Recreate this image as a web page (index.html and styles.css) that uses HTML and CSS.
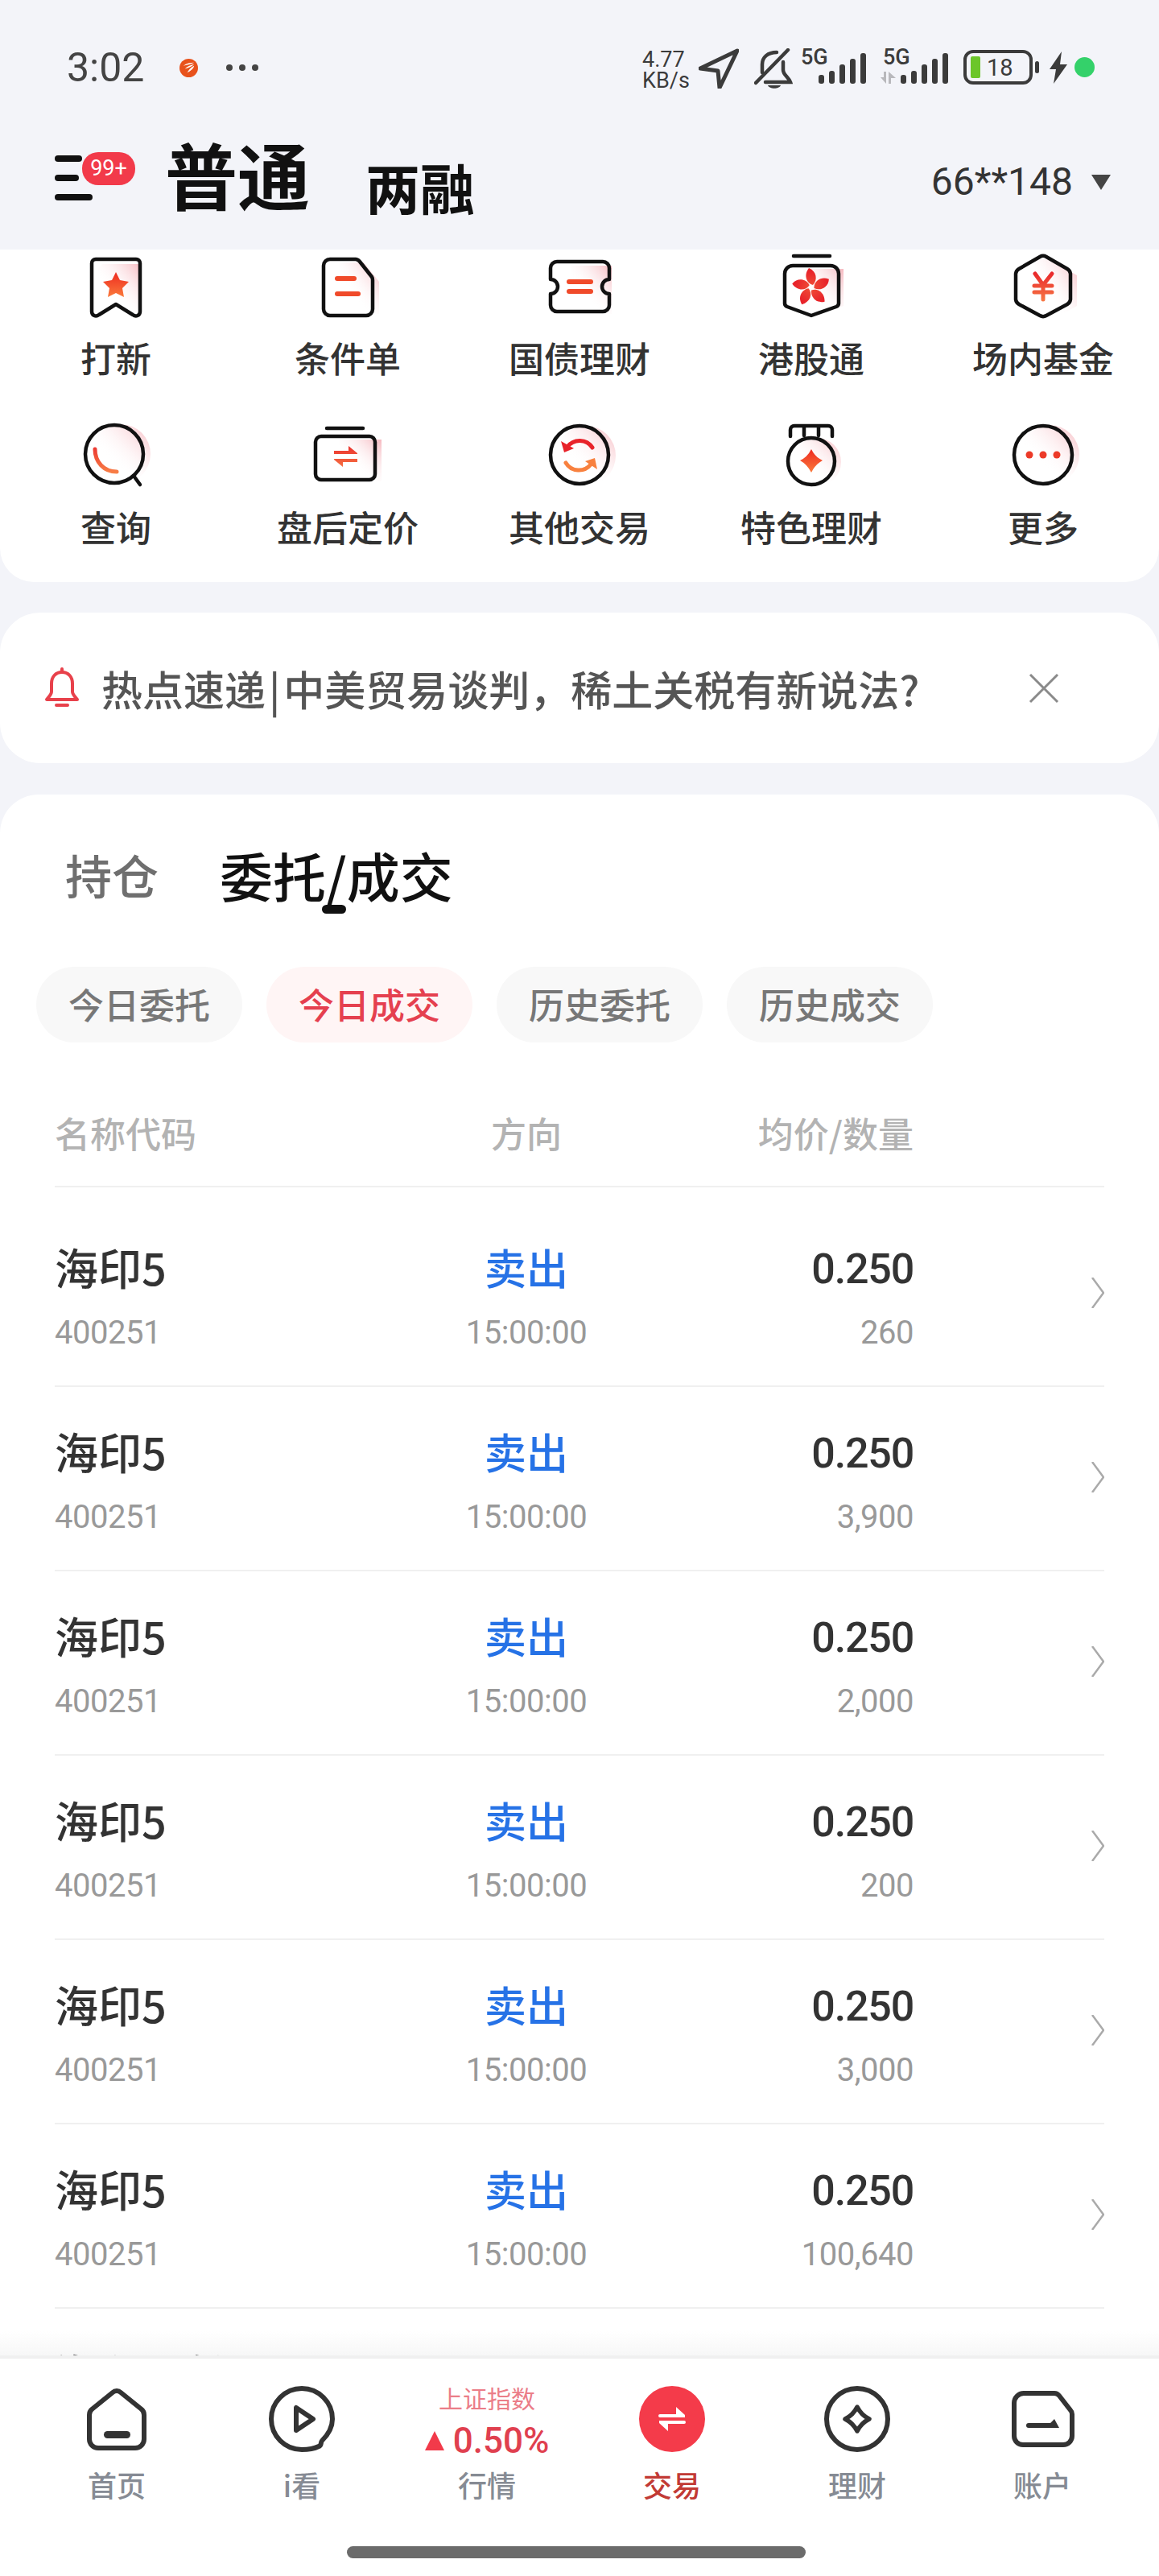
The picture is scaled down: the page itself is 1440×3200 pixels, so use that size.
FILE: index.html
```html
<!DOCTYPE html>
<html lang="zh-CN">
<head>
    <meta charset="UTF-8">
    <title>交易</title>
    <link rel="stylesheet" href="styles.css">
</head>
<body>
<svg class="defs">
    <defs>
        <linearGradient id="red" x1="0" y1="0" x2="0" y2="1">
            <stop offset="0" stop-color="#ee2a20"/>
            <stop offset="1" stop-color="#fa7a3c"/>
        </linearGradient>
        <linearGradient id="redline" gradientUnits="userSpaceOnUse" x1="0" y1="25" x2="0" y2="70">
            <stop offset="0" stop-color="#e8232a"/>
            <stop offset="1" stop-color="#fa8a4a"/>
        </linearGradient>
        <linearGradient id="pink" x1="1" y1="0" x2="0.35" y2="0.65">
            <stop offset="0" stop-color="#f6b8bf"/>
            <stop offset="1" stop-color="#fff" stop-opacity="0"/>
        </linearGradient>
    </defs>
</svg>

<header class="top">
    <div class="status">
        <span class="clock">3:02</span>
        <svg class="app-logo" viewBox="0 0 24 24">
            <circle cx="12" cy="12" r="12" fill="#e8521c"/>
            <path d="M5 9c4-3 9-4 14-4-4 2-8 3-14 4zM7 13c3-3 7-5 12-6-3 3-7 5-12 6zM10 18c2-4 5-7 9-9-1 4-5 7-9 9z" fill="#fff"/>
        </svg>
        <span class="more-dots"><i></i><i></i><i></i></span>
        <div class="status-right">
            <div class="speed">4.77<br>KB/s</div>
            <svg class="s-nav" viewBox="0 0 50 50"><path d="M48 3 2 25l22 3 2 21z" fill="none" stroke="#3b3b3b" stroke-width="5" stroke-linejoin="round"/></svg>
            <svg class="s-bell" viewBox="0 0 50 50">
                <g fill="none" stroke="#3b3b3b" stroke-width="4.5" stroke-linecap="round">
                    <path d="M42 2 2 43"/>
                    <path d="M10 30V20C10 11 17 5 28 5"/>
                    <path d="M36 17v10c0 6 7 9 9 15H14"/>
                </g>
                <path d="M17 46h16c-2 5-14 5-16 0z" fill="#3b3b3b"/>
            </svg>
            <svg class="s-sim" viewBox="0 -10 82 60">
                <text x="0" y="20" class="sim-text">5G</text>
                <rect x="22" y="33" width="7" height="11" rx="3"/><rect x="35" y="28" width="7" height="16" rx="3"/><rect x="48" y="20" width="7" height="24" rx="3"/><rect x="61" y="13" width="7" height="31" rx="3"/><rect x="74" y="6" width="7" height="38" rx="3"/>
            </svg>
            <svg class="s-sim two" viewBox="0 -10 84 60">
                <text x="3" y="20" class="sim-text">5G</text>
                <path class="sim-arrows" d="M0 36h4v-7h3v15zM10 29v15h3v-7h6z"/>
                <rect x="25" y="33" width="7" height="11" rx="3"/><rect x="38" y="28" width="7" height="16" rx="3"/><rect x="51" y="20" width="7" height="24" rx="3"/><rect x="64" y="13" width="7" height="31" rx="3"/><rect x="77" y="6" width="7" height="38" rx="3"/>
            </svg>
            <svg class="s-batt" viewBox="0 0 96 44">
                <rect x="2" y="2" width="82" height="39" rx="10" fill="none" stroke="#3b3b3b" stroke-width="4"/>
                <rect x="9" y="8" width="12" height="27" rx="2" fill="#6cc62a"/>
                <text x="29" y="32" class="batt-text">18</text>
                <rect x="89" y="14" width="5" height="15" rx="2.5" fill="#3b3b3b"/>
            </svg>
            <svg class="s-bolt" viewBox="0 0 25 40"><path d="M17 0 2 22h8L7 40l17-24h-9z" fill="#3b3b3b"/></svg>
            <span class="s-dot"></span>
        </div>
    </div>
    <div class="nav">
        <div class="menu">
            <i class="l1"></i><i class="l2"></i><i class="l3"></i>
            <span class="badge">99+</span>
        </div>
        <span class="title-main">普通</span>
        <span class="title-sub">两融</span>
        <div class="account">66**148<span class="tri"></span></div>
    </div>
</header>

<section class="grid-card">
    <div class="cell">
        <svg class="ico" viewBox="0 0 100 90">
            <path class="shade" d="M33 16h44a5 5 0 0 1 5 5v58l-32-13-22 13V21z"/>
            <path class="line" d="M25 10h50a5 5 0 0 1 5 5v60c0 5-5 7-9 4L50 66 29 79c-4 3-9 1-9-4V15a5 5 0 0 1 5-5z"/>
            <path fill="url(#red)" d="m50 26 5 10 11 2-8 8 2 11-10-5-10 5 2-11-8-8 11-2z"/>
        </svg>
        <span>打新</span>
    </div>
    <div class="cell">
        <svg class="ico" viewBox="0 0 100 90">
            <path class="shade" d="M40 14h30l19 24v40H40z"/>
            <path class="line" d="M28 10h32a7 7 0 0 1 5 3l15 19a7 7 0 0 1 1 4v36a8 8 0 0 1-8 8H28a8 8 0 0 1-8-8V18a8 8 0 0 1 8-8z"/>
            <rect x="34" y="31" width="27" height="6" rx="3" fill="#f04a2a"/>
            <rect x="34" y="50" width="32" height="6" rx="3" fill="#f04a2a"/>
        </svg>
        <span>条件单</span>
    </div>
    <div class="cell">
        <svg class="ico" viewBox="0 0 100 90">
            <path class="shade" d="M40 18h50v60H40z"/>
            <path class="line" d="M22 13h57a8 8 0 0 1 8 8v14a9 9 0 0 0 0 18v14a8 8 0 0 1-8 8H22a8 8 0 0 1-8-8V53a9 9 0 0 0 0-18V21a8 8 0 0 1 8-8z"/>
            <rect x="34" y="35" width="33" height="6" rx="3" fill="#f04a2a"/>
            <rect x="34" y="47" width="33" height="6" rx="3" fill="#f04a2a"/>
        </svg>
        <span>国债理财</span>
    </div>
    <div class="cell">
        <svg class="ico" viewBox="0 0 100 90">
            <path class="shade" d="M40 22h50v46l-30 12H40z"/>
            <path class="line" d="M28 6h45"/>
            <path class="line" d="M27 18h47a10 10 0 0 1 10 10v36a5 5 0 0 1-3 5L50 80 20 69a5 5 0 0 1-3-5V28a10 10 0 0 1 10-10z"/>
            <g fill="url(#redline)">
                <path id="petal" d="M52 42c-8-2-12-12-5-21 10 4 11 15 5 21z"/>
                <use href="#petal" transform="rotate(72 50 45)"/>
                <use href="#petal" transform="rotate(144 50 45)"/>
                <use href="#petal" transform="rotate(216 50 45)"/>
                <use href="#petal" transform="rotate(288 50 45)"/>
            </g>
        </svg>
        <span>港股通</span>
    </div>
    <div class="cell">
        <svg class="ico" viewBox="0 0 100 90">
            <path class="shade" d="M57 10 92 30v38L57 88H40V10z"/>
            <path class="line" d="M46 7a8 8 0 0 1 8 0l26 15a8 8 0 0 1 4 6v32a8 8 0 0 1-4 6L54 80a8 8 0 0 1-8 0L20 66a8 8 0 0 1-4-6V28a8 8 0 0 1 4-6z"/>
            <path d="M40 28l10 14 11-14M39 43h22M39 51h22M50 42v18" fill="none" stroke="url(#redline)" stroke-width="5" stroke-linecap="round"/>
        </svg>
        <span>场内基金</span>
    </div>
    <div class="cell">
        <svg class="ico" viewBox="0 0 100 90">
            <circle class="shade" cx="56" cy="42" r="37"/>
            <circle class="line" cx="48" cy="42" r="36"/>
            <path class="line" d="m72 69 8 11"/>
            <path d="M24 36c0 16 11 28 27 28" fill="none" stroke="url(#redline)" stroke-width="5" stroke-linecap="round"/>
        </svg>
        <span>查询</span>
    </div>
    <div class="cell">
        <svg class="ico" viewBox="0 0 100 90">
            <path class="shade" d="M40 24h52v52H40z"/>
            <path class="line" d="M24 10h45"/>
            <rect class="line" x="10" y="20" width="74" height="54" rx="7"/>
            <path fill="url(#redline)" d="M33 38h18v-6l11 9v1H33zM33 48h29v4H44v6l-11-9z"/>
        </svg>
        <span>盘后定价</span>
    </div>
    <div class="cell">
        <svg class="ico" viewBox="0 0 100 90">
            <circle class="shade" cx="58" cy="44" r="37"/>
            <circle class="line" cx="50" cy="43" r="36"/>
            <path d="M66 34a19 19 0 0 0-31-1" fill="none" stroke="#e8232a" stroke-width="5" stroke-linecap="round"/>
            <path d="m27 26 4 14 12-5z" fill="#e8232a"/>
            <path d="M33 53a19 19 0 0 0 31 2" fill="none" stroke="#f8813f" stroke-width="5" stroke-linecap="round"/>
            <path d="m72 61-3-14-12 4z" fill="#f8813f"/>
        </svg>
        <span>其他交易</span>
    </div>
    <div class="cell">
        <svg class="ico" viewBox="0 0 100 90">
            <circle class="shade" cx="57" cy="52" r="30"/>
            <path class="line" d="M24 20v-8a5 5 0 0 1 5-5h42a5 5 0 0 1 5 5v8M41 8v11M59 8v11"/>
            <circle class="line" cx="50" cy="51" r="29"/>
            <path fill="url(#red)" d="M50 36q5 10 14 14-9 5-14 15-5-10-14-15 9-4 14-14z"/>
        </svg>
        <span>特色理财</span>
    </div>
    <div class="cell">
        <svg class="ico" viewBox="0 0 100 90">
            <circle class="shade" cx="58" cy="43" r="37"/>
            <circle class="line" cx="50" cy="43" r="36"/>
            <circle cx="33" cy="43" r="4.5" fill="#ec3a28"/><circle cx="50" cy="43" r="4.5" fill="#ec3a28"/><circle cx="67" cy="43" r="4.5" fill="#ec3a28"/>
        </svg>
        <span>更多</span>
    </div>
</section>

<section class="notice">
    <svg class="notice-bell" viewBox="0 0 44 52">
        <path d="M22 6c-8 0-13 6-13 14v10c0 4-3 6-6 10h38c-3-4-6-6-6-10V20c0-8-5-14-13-14z" fill="none" stroke="#e8414b" stroke-width="4" stroke-linejoin="round"/>
        <path d="M22 2v4M15 47h14" stroke="#e8414b" stroke-width="4" stroke-linecap="round"/>
    </svg>
    <span class="notice-text">热点速递<span class="bar">|</span>中美贸易谈判，稀土关税有新说法?</span>
    <svg class="notice-close" viewBox="0 0 38 38"><path d="m2 2 34 34M36 2 2 36" stroke="#8a8a8a" stroke-width="3"/></svg>
</section>

<section class="main-card">
    <div class="tabs">
        <span class="tab">持仓</span>
        <span class="tab on">委托/成交</span>
    </div>
    <div class="chips">
        <span class="chip">今日委托</span>
        <span class="chip active">今日成交</span>
        <span class="chip">历史委托</span>
        <span class="chip">历史成交</span>
    </div>
    <div class="table-head">
        <span>名称代码</span>
        <span class="mid">方向</span>
        <span class="end">均价/数量</span>
    </div>
    <div class="rows">
        <div class="row">
            <div><div class="name">海印5</div><div class="sub">400251</div></div>
            <div class="mid"><div class="dir">卖出</div><div class="sub">15:00:00</div></div>
            <div class="end"><div class="price">0.250</div><div class="sub">260</div></div>
            <svg class="chev" viewBox="0 0 16 38"><path d="m1 0 14 19L1 38"/></svg>
        </div>
        <div class="row">
            <div><div class="name">海印5</div><div class="sub">400251</div></div>
            <div class="mid"><div class="dir">卖出</div><div class="sub">15:00:00</div></div>
            <div class="end"><div class="price">0.250</div><div class="sub">3,900</div></div>
            <svg class="chev" viewBox="0 0 16 38"><path d="m1 0 14 19L1 38"/></svg>
        </div>
        <div class="row">
            <div><div class="name">海印5</div><div class="sub">400251</div></div>
            <div class="mid"><div class="dir">卖出</div><div class="sub">15:00:00</div></div>
            <div class="end"><div class="price">0.250</div><div class="sub">2,000</div></div>
            <svg class="chev" viewBox="0 0 16 38"><path d="m1 0 14 19L1 38"/></svg>
        </div>
        <div class="row">
            <div><div class="name">海印5</div><div class="sub">400251</div></div>
            <div class="mid"><div class="dir">卖出</div><div class="sub">15:00:00</div></div>
            <div class="end"><div class="price">0.250</div><div class="sub">200</div></div>
            <svg class="chev" viewBox="0 0 16 38"><path d="m1 0 14 19L1 38"/></svg>
        </div>
        <div class="row">
            <div><div class="name">海印5</div><div class="sub">400251</div></div>
            <div class="mid"><div class="dir">卖出</div><div class="sub">15:00:00</div></div>
            <div class="end"><div class="price">0.250</div><div class="sub">3,000</div></div>
            <svg class="chev" viewBox="0 0 16 38"><path d="m1 0 14 19L1 38"/></svg>
        </div>
        <div class="row">
            <div><div class="name">海印5</div><div class="sub">400251</div></div>
            <div class="mid"><div class="dir">卖出</div><div class="sub">15:00:00</div></div>
            <div class="end"><div class="price">0.250</div><div class="sub">100,640</div></div>
            <svg class="chev" viewBox="0 0 16 38"><path d="m1 0 14 19L1 38"/></svg>
        </div>
        <div class="row">
            <div><div class="name">海印股份</div></div>
        </div>
    </div>
</section>

<nav class="tabbar">
    <div class="fade"></div>
    <div class="tabbar-items">
        <div class="item">
            <svg class="tico" viewBox="0 0 90 90">
                <path class="tline" d="M40 12a7 7 0 0 1 10 0l26 21a9 9 0 0 1 3 7v30a11 11 0 0 1-11 11H22a11 11 0 0 1-11-11V40a9 9 0 0 1 3-7z"/>
                <rect x="29" y="60" width="33" height="9" rx="4.5" fill="#333"/>
            </svg>
            <span>首页</span>
        </div>
        <div class="item">
            <svg class="tico" viewBox="0 0 90 90">
                <path class="tline" d="M70 72c8-8 13-17 13-27A38 38 0 1 0 45 83c7 0 15-1 21-4 4-1 2-5 4-7z"/>
                <path class="tline" d="M38 31v28l21-14z"/>
            </svg>
            <span>i看</span>
        </div>
        <div class="item market">
            <div class="index-name">上证指数</div>
            <div class="index-val"><i class="up"></i>0.50%</div>
            <span>行情</span>
        </div>
        <div class="item current">
            <svg class="tico" viewBox="0 0 90 90">
                <circle cx="45" cy="45" r="41" fill="#f43b4a"/>
                <path d="M30 39h20v-9l11 10v3H30a2 2 0 0 1 0-4zM29 47h31a2 2 0 0 1 0 4H40v9L29 50z" fill="#fff"/>
            </svg>
            <span>交易</span>
        </div>
        <div class="item">
            <svg class="tico" viewBox="0 0 90 90">
                <circle class="tline" cx="45" cy="45" r="38"/>
                <path class="tline thin" d="M45 30q5 10 15 15-10 5-15 15-5-10-15-15 10-5 15-15z"/>
            </svg>
            <span>理财</span>
        </div>
        <div class="item">
            <svg class="tico" viewBox="0 0 90 90">
                <path class="tline" d="M22 13h38a8 8 0 0 1 6 3l14 18a7 7 0 0 1 2 5v27a11 11 0 0 1-11 11H21a11 11 0 0 1-11-11V25a12 12 0 0 1 12-12z"/>
                <path d="M28 50h27l5-5 6 11H28a3 3 0 0 1 0-6z" fill="#333"/>
            </svg>
            <span>账户</span>
        </div>
    </div>
    <div class="gesture"></div>
</nav>
</body>
</html>
```

FILE: styles.css
```css
* {
    box-sizing: border-box;
}

html, body {
    margin: 0;
    padding: 0;
}

body {
    position: relative;
    width: 1440px;
    height: 3200px;
    overflow: hidden;
    background-color: #f3f4f9;
    font-family: "Noto Sans CJK SC", "Noto Sans", sans-serif;
    color: #333;
}

.defs {
    display: block;
    width: 0;
    height: 0;
}

i {
    display: block;
}

/* status bar */
.top {
    height: 310px;
    background-color: #f3f4f9;
    padding-top: 55px;
}

.status {
    display: flex;
    align-items: center;
    height: 58px;
    padding-left: 83px;
    color: #444;
    font-family: Roboto, sans-serif;
}

.clock {
    font-size: 50px;
    width: 140px;
}

.app-logo {
    width: 23px;
    height: 23px;
}

.more-dots {
    display: flex;
    gap: 8px;
    margin-left: 35px;
}

.more-dots i {
    width: 8px;
    height: 8px;
    border-radius: 50%;
    background-color: #444;
}

.status-right {
    display: flex;
    align-items: flex-start;
    margin-left: auto;
    margin-right: 80px;
    height: 58px;
    padding-top: 5px;
}

.speed {
    width: 70px;
    padding-top: 1px;
    margin-right: 0;
    font-size: 27px;
    line-height: 26px;
    color: #3b3b3b;
}

.s-nav, .s-bell {
    width: 50px;
    height: 50px;
}

.s-bell {
    margin-left: 19px;
    margin-right: 8px;
}

.s-sim {
    width: 82px;
    height: 60px;
    margin-top: -10px;
    fill: #3b3b3b;
}

.s-sim.two {
    width: 84px;
    margin-left: 17px;
}

.sim-text {
    font-family: Roboto, sans-serif;
    font-size: 27px;
    font-weight: 500;
}

.sim-arrows {
    fill: #b8b8bc;
}

.s-batt {
    width: 96px;
    height: 44px;
    margin-left: 19px;
    margin-top: 2px;
}

.batt-text {
    font-family: Roboto, sans-serif;
    font-size: 29px;
    fill: #3b3b3b;
}

.s-bolt {
    width: 25px;
    height: 40px;
    margin-left: 9px;
    margin-top: 4px;
}

.s-dot {
    width: 25px;
    height: 25px;
    margin-left: 8px;
    margin-top: 11px;
    border-radius: 50%;
    background-color: #34d16a;
}

/* nav row */
.nav {
    display: flex;
    align-items: flex-start;
    padding-top: 55px;
    padding-left: 68px;
    padding-right: 60px;
}

.menu {
    position: relative;
    width: 100px;
    margin-top: 25px;
}

.menu i {
    height: 8px;
    border-radius: 4px;
    background-color: #111;
    margin-bottom: 16px;
}

.l1 { width: 34px; }
.l2 { width: 30px; }
.l3 { width: 47px; }

.badge {
    position: absolute;
    left: 34px;
    top: -4px;
    width: 66px;
    height: 41px;
    border-radius: 20px;
    background-color: #f23a4a;
    color: #fff;
    font-family: Roboto, sans-serif;
    font-size: 27px;
    line-height: 41px;
    text-align: center;
}

.title-main {
    margin-left: 37px;
    font-size: 90px;
    font-weight: 700;
    line-height: 120px;
    color: #111;
    margin-top: -13px;
}

.title-sub {
    margin-left: 69px;
    font-size: 68px;
    font-weight: 700;
    line-height: 90px;
    color: #111;
    margin-top: 19px;
}

.account {
    display: flex;
    align-items: center;
    margin-left: auto;
    font-family: Roboto, sans-serif;
    font-size: 48px;
    line-height: 60px;
    margin-top: 28px;
    color: #333;
}

.tri {
    width: 0;
    height: 0;
    margin-left: 23px;
    border-left: 12px solid transparent;
    border-right: 12px solid transparent;
    border-top: 19px solid #444;
}

/* entry grid */
.grid-card {
    display: grid;
    grid-template-columns: repeat(5, 288px);
    height: 413px;
    background-color: #fff;
    border-radius: 0 0 42px 42px;
    padding-top: 2px;
}

.cell {
    display: flex;
    flex-direction: column;
    align-items: center;
    height: 210px;
}

.cell span {
    margin-top: 10px;
    font-size: 44px;
    line-height: 64px;
    font-weight: 500;
    color: #333;
}

.ico {
    width: 100px;
    height: 90px;
}

.line {
    fill: none;
    stroke: #111;
    stroke-width: 4.5;
    stroke-linecap: round;
    stroke-linejoin: round;
}

.shade {
    fill: url(#pink);
}

/* notice */
.notice {
    display: flex;
    align-items: center;
    height: 187px;
    margin-top: 38px;
    padding-left: 55px;
    padding-right: 124px;
    background-color: #fff;
    border-radius: 50px;
}

.notice-bell {
    width: 44px;
    height: 52px;
}

.notice-text {
    margin-left: 27px;
    font-size: 51px;
    font-weight: 500;
    color: #555;
    white-space: nowrap;
}

.bar {
    margin: 0 4px;
}

.notice-close {
    width: 38px;
    height: 38px;
    margin-left: auto;
}

/* main card */
.main-card {
    margin-top: 39px;
    padding-top: 49px;
    height: 2300px;
    background-color: #fff;
    border-radius: 48px 48px 0 0;
}

.tabs {
    display: flex;
    align-items: center;
    height: 100px;
    padding-left: 81px;
}

.tab {
    font-size: 58px;
    font-weight: 500;
    color: #6f6f6f;
}

.tab.on {
    position: relative;
    margin-left: 76px;
    font-size: 66px;
    color: #111;
}

.tab.on::after {
    content: "";
    position: absolute;
    left: 127px;
    bottom: -1px;
    width: 30px;
    height: 11px;
    border-radius: 6px;
    background-color: #111;
}

.chips {
    display: flex;
    gap: 30px;
    margin-top: 65px;
    padding-left: 45px;
}

.chip {
    width: 256px;
    height: 94px;
    border-radius: 47px;
    background-color: #f8f8f8;
    color: #777;
    font-size: 44px;
    font-weight: 500;
    line-height: 92px;
    text-align: center;
}

.chip.active {
    background-color: #fff5f5;
    color: #e5404f;
}

.table-head, .row {
    display: grid;
    grid-template-columns: 400px 372px 295px 1fr;
    margin: 0 68px;
}

.table-head {
    margin-top: 48px;
    height: 132px;
    line-height: 128px;
    font-size: 44px;
    font-weight: 500;
    color: #b3b3b3;
    border-bottom: 2px solid #f0f0f0;
}

.mid {
    text-align: center;
}

.end {
    text-align: right;
}

.rows {
    padding-top: 19px;
}

.row {
    height: 229px;
    padding-top: 48px;
    border-bottom: 2px solid #f0f0f0;
}

.name {
    font-size: 54px;
    line-height: 64px;
    font-weight: 500;
    color: #333;
}

.dir {
    font-size: 52px;
    line-height: 64px;
    font-weight: 500;
    color: #2672e6;
}

.price {
    margin-top: 3px;
    margin-bottom: -3px;
    font-family: Roboto, sans-serif;
    font-size: 52px;
    font-weight: 500;
    line-height: 64px;
    letter-spacing: -1.2px;
    color: #333;
}

.sub {
    margin-top: 22px;
    font-family: Roboto, sans-serif;
    font-size: 40px;
    line-height: 56px;
    letter-spacing: -0.5px;
    color: #999;
}

.chev {
    width: 16px;
    height: 38px;
    justify-self: end;
    margin-top: 45px;
    fill: none;
    stroke: #aaa;
    stroke-width: 2.5;
}

/* bottom bar, sits over the list */
.tabbar {
    position: absolute;
    left: 0;
    right: 0;
    top: 2896px;
    height: 304px;
}

.fade {
    height: 30px;
    background: linear-gradient(rgba(235, 235, 235, 0), rgba(235, 235, 235, 0.4));
}

.tabbar-items {
    display: grid;
    grid-template-columns: repeat(6, 230px);
    height: 278px;
    padding: 30px 0 0 30px;
    background-color: #fff;
    border-top: 4px solid #f0f0f0;
}

.item {
    display: flex;
    flex-direction: column;
    align-items: center;
    font-size: 36px;
    font-weight: 500;
    color: #868b94;
}

.item > span {
    margin-top: 12px;
    line-height: 48px;
}

.tico {
    width: 90px;
    height: 90px;
}

.tline {
    fill: none;
    stroke: #333;
    stroke-width: 6;
    stroke-linejoin: round;
}

.tline.thin {
    stroke-width: 5.5;
}

.item.current {
    color: #c23a35;
}

.index-name {
    font-size: 30px;
    line-height: 36px;
    font-weight: 400;
    color: #eb7d88;
    margin-top: 0;
}

.index-val {
    display: flex;
    align-items: center;
    margin-top: 12px;
    font-family: Roboto, sans-serif;
    font-size: 44px;
    line-height: 48px;
    color: #e0404f;
}

.up {
    width: 0;
    height: 0;
    margin-right: 11px;
    border-left: 12px solid transparent;
    border-right: 12px solid transparent;
    border-bottom: 24px solid #f23a4a;
}

.item.market > span {
    margin-top: 6px;
}

.gesture {
    position: absolute;
    left: 431px;
    top: 267px;
    width: 570px;
    height: 15px;
    border-radius: 8px;
    background-color: #6b6b6b;
}
```
